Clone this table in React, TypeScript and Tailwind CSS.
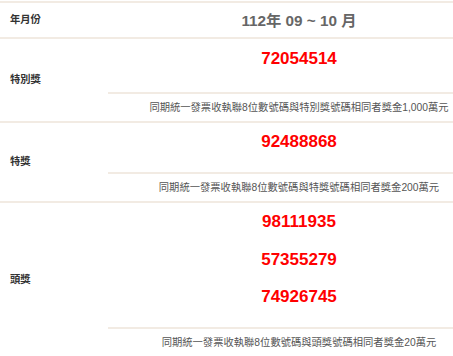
const line = 'border-[#f2ebe3]'

function Label({ text }: { text: string }) {
  return (
    <div className="w-[108px] shrink-0 flex items-center pl-[10px] text-[10.3px] font-bold text-[#333]">
      {text}
    </div>
  )
}

function Numbers({ items, top, bottom }: { items: string[]; top: string; bottom: string }) {
  return (
    <div className={`pl-[37px] ${top} ${bottom}`}>
      {items.map((n) => (
        <div key={n} className="h-[37.5px] flex items-center justify-center text-[17px] font-bold text-[#ff0000] font-['Liberation_Sans',sans-serif]">
          {n}
        </div>
      ))}
    </div>
  )
}

function Desc({ text }: { text: string }) {
  return (
    <div className="h-[27px] pl-[37px] flex items-center justify-center whitespace-nowrap text-[10.3px] text-[#555]">
      {text}
    </div>
  )
}

function PrizeRow({ label, items, desc, top, bottom }: { label: string; items: string[]; desc: string; top: string; bottom: string }) {
  return (
    <div className={`flex border-b-2 ${line}`}>
      <Label text={label} />
      <div className="flex-1">
        <div className={`border-b-2 ${line}`}>
          <Numbers items={items} top={top} bottom={bottom} />
        </div>
        <Desc text={desc} />
      </div>
    </div>
  )
}

export default function App() {
  return (
    <div className="w-[453px] h-[356px] overflow-hidden bg-white pt-px font-['Liberation_Sans','Noto_Sans_CJK_TC',sans-serif]">
      <div className={`border-t-2 ${line}`}>
        <div className={`flex h-[36px] border-b-2 ${line}`}>
          <Label text="年月份" />
          <div className="flex-1 pl-[37px] pt-[3px] flex items-center justify-center text-[15.3px] font-bold text-[#666]">
            112年 09 ~ 10 月
          </div>
        </div>
        <PrizeRow
          label="特別獎"
          items={['72054514']}
          desc="同期統一發票收執聯8位數號碼與特別獎號碼相同者獎金1,000萬元"
          top="pt-[1px]"
          bottom="pb-[14.5px]"
        />
        <PrizeRow
          label="特獎"
          items={['92488868']}
          desc="同期統一發票收執聯8位數號碼與特獎號碼相同者獎金200萬元"
          top="pt-0"
          bottom="pb-[11.5px]"
        />
        <PrizeRow
          label="頭獎"
          items={['98111935', '57355279', '74926745']}
          desc="同期統一發票收執聯8位數號碼與頭獎號碼相同者獎金20萬元"
          top="pt-0"
          bottom="pb-[11.5px]"
        />
      </div>
    </div>
  )
}
